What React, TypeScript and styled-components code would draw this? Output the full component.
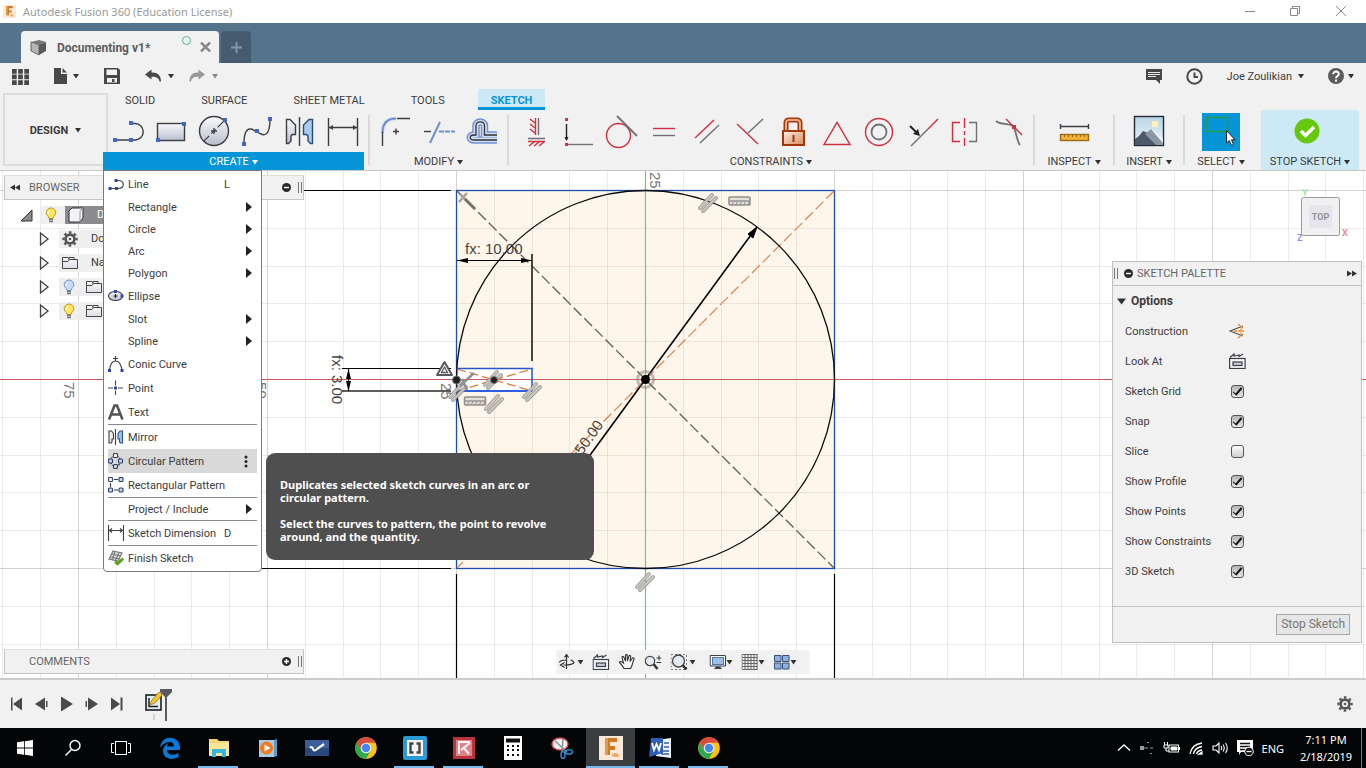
import React from 'react';
import styled, { createGlobalStyle, css } from 'styled-components';

const ui = `Roboto, "Liberation Sans", sans-serif`;
const system = `"Noto Sans", "Open Sans", sans-serif`;
const blue = '#0696d7';
const panel = '#f1f1f1';
const ink = '#3c3c3c';

const GlobalStyle = createGlobalStyle`
  *, *::before, *::after { box-sizing: border-box; }
  body { margin: 0; background: #fff; color: ${ink}; font: 11px/16px ${ui}; }
  button { font: inherit; color: inherit; background: none; border: 0; padding: 0; cursor: default; }
  svg { display: block; flex: none; }
  p { margin: 0; }
`;

/* ---------- shell ---------- */

const Shell = styled.div`
  display: flex;
  flex-direction: column;
  min-height: 100vh;
  overflow: hidden;
`;

const TitleBar = styled.header`
  display: flex;
  align-items: center;
  gap: 7px;
  height: 23px;
  padding: 0 18px 0 3px;
  background: #fff;
  color: #999;
  font: 11px/20px ${system};
`;

const WindowButtons = styled.div`
  display: flex;
  gap: 34px;
  margin-left: auto;
`;

const TabStrip = styled.nav`
  display: flex;
  align-items: flex-end;
  gap: 2px;
  height: 40px;
  padding-left: 21px;
  background: #56738c;
`;

const DocumentTab = styled.div`
  display: flex;
  align-items: center;
  width: 198px;
  height: 32px;
  padding: 0 8px 0 9px;
  border-radius: 4px 4px 0 0;
  background: ${panel};
  color: #5c5c5c;
  font-size: 12px;
  font-weight: 700;
`;

const TabName = styled.span`
  flex: 1;
  padding: 2px 0 0 10px;
`;

const SyncRing = styled.span`
  align-self: flex-start;
  width: 9px;
  height: 9px;
  margin: 5px 9px 0 0;
  border: 1px solid #4bb8a0;
  border-radius: 50%;
`;

const NewTab = styled.button`
  display: grid;
  place-items: center;
  width: 30px;
  height: 32px;
  border-radius: 4px 4px 0 0;
  background: #455b70;
`;

const QuickBar = styled.div`
  display: flex;
  align-items: center;
  height: 26px;
  padding: 0 12px;
  background: ${panel};
`;

const QuickGroup = styled.div<{ $gap?: number; $end?: boolean }>`
  display: flex;
  align-items: center;
  gap: ${p => p.$gap ?? 25}px;
  margin-left: ${p => (p.$end ? 'auto' : '0')};
`;

const IconButton = styled.button<{ $gap?: number }>`
  display: flex;
  align-items: center;
  gap: ${p => p.$gap ?? 6}px;
`;

const UserName = styled.span`
  padding-top: 2px;
`;

/* ---------- ribbon ---------- */

const Ribbon = styled.div`
  position: relative;
  z-index: 2;
  display: flex;
  height: 82px;
  padding: 0 7px 0 3px;
  border-bottom: 1px solid #c8c8c8;
  background: ${panel};
`;

const Workspace = styled.button`
  display: flex;
  align-items: center;
  justify-content: center;
  gap: 7px;
  width: 105px;
  height: 73px;
  margin-top: 4px;
  padding-top: 2px;
  border: 2px solid #dcdcdc;
  font-weight: 700;
`;

const RibbonMain = styled.div`
  display: flex;
  flex: 1;
  flex-direction: column;
  margin-left: -5px;
`;

const RibbonTabs = styled.div`
  display: flex;
  gap: 20px;
  height: 21px;
  padding-left: 9px;
`;

const RibbonTab = styled.button<{ $active?: boolean }>`
  height: 21px;
  padding: 2px 13px 0;
  ${p =>
    p.$active &&
    css`
      padding-top: 4px;
      border-bottom: 3px solid ${blue};
      background: #cce9f5;
      color: ${blue};
      font-weight: 700;
    `}
`;

const Groups = styled.div`
  display: flex;
  height: 61px;
`;

const Group = styled.section<{ $width?: number; $lit?: boolean }>`
  position: relative;
  display: flex;
  flex-direction: column;
  width: ${p => (p.$width ? `${p.$width}px` : 'auto')};
  height: ${p => (p.$lit ? '60px' : 'auto')};
  margin-left: ${p => (p.$lit ? '8px' : '0')};
  background: ${p => (p.$lit ? '#cce9f5' : 'transparent')};
`;

const GroupTools = styled.div<{ $inset?: number }>`
  display: flex;
  justify-content: center;
  height: 42px;
  padding-left: ${p => p.$inset ?? 0}px;
`;

const Tool = styled.button<{ $selected?: boolean }>`
  display: grid;
  place-items: center;
  width: ${p => (p.$selected ? 38 : 43)}px;
  height: ${p => (p.$selected ? 38 : 42)}px;
  margin-top: ${p => (p.$selected ? 3 : 0)}px;
  background: ${p => (p.$selected ? blue : 'transparent')};
`;

const GroupLabel = styled.button<{ $open?: boolean }>`
  display: flex;
  align-items: center;
  justify-content: center;
  gap: 3px;
  height: 18px;
  padding-top: 2px;
  background: ${p => (p.$open ? blue : 'transparent')};
  color: ${p => (p.$open ? '#fff' : ink)};
  white-space: nowrap;
`;

const Divider = styled.i`
  width: 2px;
  height: 50px;
  margin: 5px 4px 0;
  background: #dadada;
`;

/* ---------- create menu ---------- */

const Menu = styled.div`
  position: absolute;
  top: 60px;
  left: 0;
  display: flex;
  flex-direction: column;
  width: 159px;
  padding: 1px 4px;
  border: 1px solid #7b7b7b;
  border-radius: 0 0 4px 4px;
  background: #fff;
`;

const MenuRow = styled.div`
  position: relative;
`;

const MenuItem = styled.button<{ $tall?: boolean; $hover?: boolean }>`
  display: flex;
  align-items: center;
  width: 100%;
  height: ${p => (p.$tall ? 24 : 22)}px;
  padding-right: 5px;
  background: ${p => (p.$hover ? '#d9d9d9' : 'transparent')};
  text-align: left;
  white-space: nowrap;
`;

const MenuIcon = styled.span`
  width: 20px;
`;

const MenuText = styled.span`
  flex: 1;
  padding-top: 2px;
`;

const Shortcut = styled.kbd`
  width: 28px;
  padding-top: 2px;
  font: inherit;
`;

const MenuRule = styled.hr`
  width: 100%;
  height: 1px;
  margin: 0;
  border: 0;
  background: #888;
`;

const Tooltip = styled.div`
  position: absolute;
  top: 4px;
  left: 158px;
  display: flex;
  flex-direction: column;
  gap: 13px;
  width: 328px;
  padding: 25px 14px 17px;
  border-radius: 9px;
  background: #4f4f4f;
  color: #fff;
  font: 700 11px/13px ${system};
`;

/* ---------- canvas ---------- */

const Canvas = styled.main`
  position: relative;
  flex: 1;
  min-height: 507px;
  background: #fff;
`;

const Drawing = styled.svg`
  position: absolute;
  inset: 0;
  width: 100%;
  height: 100%;
`;

const BrowserPanel = styled.aside`
  position: absolute;
  top: 4px;
  left: 4px;
  width: 300px;
`;

const CommentsPanel = styled.aside`
  position: absolute;
  bottom: 4px;
  left: 4px;
  width: 300px;
`;

const PanelBar = styled.div`
  display: flex;
  align-items: center;
  height: 25px;
  padding: 0 1px 0 5px;
  border: 1px solid #c4c4c4;
  border-top-color: #dedede;
  background: ${panel};
  color: #666;
`;

const PanelName = styled.h2<{ $inset: number }>`
  flex: 1;
  margin: 0;
  padding-left: ${p => p.$inset}px;
  font-size: 11px;
  font-weight: 400;
`;

const Tree = styled.ul`
  margin: 3px 0 0;
  padding: 0;
  list-style: none;
`;

const TreeRow = styled.li<{ $root?: boolean }>`
  display: flex;
  align-items: center;
  height: 24px;
  padding-left: ${p => (p.$root ? 16 : 35)}px;
`;

const TreeCell = styled.span<{ $bulb?: boolean; $dark?: boolean }>`
  display: flex;
  align-items: center;
  gap: 13px;
  height: 18px;
  padding: ${p => (p.$bulb ? '0 8px 0 4px' : '0 3px')};
  background: ${p => (p.$dark ? '#8c8c90' : '#efefef')};
  color: ${p => (p.$dark ? '#fff' : ink)};
`;

const TreeToggle = styled.button<{ $root?: boolean }>`
  margin-right: ${p => (p.$root ? 8 : 9)}px;
`;

const Palette = styled.aside`
  position: absolute;
  top: 90px;
  right: 4px;
  width: 250px;
  border: 1px solid #c0c0c0;
  background: ${panel};
`;

const PaletteBar = styled.div`
  display: flex;
  align-items: center;
  height: 24px;
  padding: 0 4px 0 1px;
  border-bottom: 1px solid #c0c0c0;
  color: #666;
`;

const PaletteSection = styled.h3`
  display: flex;
  align-items: center;
  gap: 5px;
  height: 30px;
  margin: 0;
  padding-left: 4px;
  font-size: 12px;
  font-weight: 700;
`;

const OptionRow = styled.label`
  display: grid;
  grid-template-columns: 103px 18px;
  align-items: center;
  justify-items: center;
  height: 30px;
  padding-left: 12px;
`;

const OptionName = styled.span`
  justify-self: start;
  padding-top: 2px;
`;

const Tick = styled.input`
  display: grid;
  place-items: center;
  width: 13px;
  height: 13px;
  margin: 0;
  appearance: none;
  border: 1px solid #555;
  border-radius: 3px;
  background: linear-gradient(#fdfdfd, #cfcfcf);
  &:checked { background: linear-gradient(#b5b5b5, #e6e6e6); }
  &:checked::after {
    content: '';
    width: 5px;
    height: 9px;
    margin-bottom: 3px;
    border: solid #111;
    border-width: 0 2px 1px 0;
    transform: rotate(40deg);
  }
`;

const PaletteFoot = styled.div`
  display: flex;
  justify-content: flex-end;
  margin-top: 20px;
  padding: 7px 11px;
  border-top: 1px solid #c4c4c4;
`;

const StopButton = styled.button`
  height: 21px;
  padding: 0 4px;
  border: 1px solid #a8a8a8;
  background: #e6e6e6;
  color: #777;
  font: 12px/19px ${ui};
`;

const NavBar = styled.div`
  position: absolute;
  bottom: 4px;
  left: 50%;
  display: flex;
  align-items: center;
  gap: 9px;
  width: 253px;
  height: 24px;
  padding: 0 2px;
  background: ${panel};
  transform: translateX(-50%);
`;

const Grip = styled.i<{ $lead?: boolean }>`
  width: 4px;
  height: 11px;
  margin: ${p => (p.$lead ? '0 6px 0 0' : '0 0 0 7px')};
  border: solid #777;
  border-width: 0 1px;
`;

/* ---------- timeline and taskbar ---------- */

const Timeline = styled.footer`
  display: flex;
  align-items: center;
  justify-content: space-between;
  height: 50px;
  padding: 0 13px 0 10px;
  border-top: 2px solid #cbcbcb;
  background: ${panel};
`;

const Transport = styled.div`
  display: flex;
  align-items: center;
  gap: 9px;
`;

const Marker = styled.div`
  padding-left: 10px;
`;

const Taskbar = styled.footer`
  display: flex;
  height: 40px;
  padding-left: 1px;
  background: #030506;
  color: #fff;
  font: 11px/17px ${system};
`;

const TaskButton = styled.button<{ $state?: 'open' | 'front'; $narrow?: boolean }>`
  position: relative;
  display: grid;
  place-items: center;
  width: ${p => (p.$narrow ? 48 : 49)}px;
  height: 40px;
  background: ${p => (p.$state === 'front' ? '#3b3e40' : 'transparent')};
  &::after {
    content: '';
    position: absolute;
    right: ${p => (p.$state === 'front' ? 0 : 5)}px;
    bottom: 0;
    left: ${p => (p.$state === 'front' ? 0 : 4)}px;
    height: 2px;
    background: ${p => (p.$state ? '#76b9ed' : 'transparent')};
  }
`;

const Tray = styled.div`
  display: flex;
  align-items: center;
  gap: 8px;
  margin-left: auto;
  padding-right: 4px;
`;

const Clock = styled.time`
  width: 54px;
  margin-left: 7px;
  text-align: center;
`;

const ShowDesktop = styled.i`
  align-self: stretch;
  width: 1px;
  background: #777;
`;

/* ---------- small marks ---------- */

const Caret = ({ color = '#333' }: { color?: string }) => (
  <svg width="6" height="5" viewBox="0 0 6 5"><path d="M0 0H6L3 4.5Z" fill={color} /></svg>
);

const Sq = ({ x, y, c = '#4267c4', s = 4 }: { x: number; y: number; c?: string; s?: number }) => (
  <rect x={x - s / 2} y={y - s / 2} width={s} height={s} fill={c} />
);

const Box40 = ({ children }: { children: React.ReactNode }) => (
  <svg width="40" height="40" viewBox="0 0 40 40" fill="none" strokeWidth="1.4">{children}</svg>
);

const dk = '#3a3d42';
const red = '#cf2f3f';
const gy = '#6e7074';

const createTools: [string, React.ReactNode][] = [
  ['Line', <><path d="M7 29H27a8.2 8.2 0 0 0 0-16.5H23" stroke={dk} /><Sq x={7} y={29} /><Sq x={23} y={29} /><Sq x={23} y={12} /></>],
  ['Rectangle', <><rect x="6.5" y="12.5" width="27" height="17" fill="url(#steel)" stroke={dk} /><Sq x={33} y={13} /><Sq x={7} y={29} /></>],
  ['Circle', <><circle cx="20" cy="20" r="14.5" fill="url(#steel)" stroke={dk} /><path d="M30 10L10 30" stroke={dk} strokeWidth="1.1" strokeDasharray="9 3 6 3" /><path d="M20 17v6M17 20h6" stroke={dk} /><Sq x={31} y={9} /></>],
  ['Spline', <><path d="M7 33C7 22 9 18 13 18C17 18 17 20 20 20.5C23 23 26 25 29 23C32 21 33 16 33 8" stroke={dk} /><Sq x={7} y={33} /><Sq x={20} y={20} /><Sq x={33} y={8} /></>],
  ['Mirror', <><path d="M6.5 8.5H10L15.500 14V23.5H12.5Q11 24 11 26V30L8.5 32.5H6.5Z" fill="url(#steel)" stroke={dk} /><path d="M19.5 6V35" stroke={dk} /><path d="M32.5 8.5H29L23.5 14V23.5H26.5Q28 24 28 26V30L30.5 32.5H32.5Z" fill="#a8cbee" stroke="#2f4a78" /></>],
  ['Sketch Dimension', <><path d="M5.5 7V35M34.5 7V35M6 16.5H34" stroke={dk} /><path d="M6 16.5l4-2.5v5zM34 16.5l-4-2.5v5z" fill={dk} /></>],
];

const modifyTools: [string, React.ReactNode][] = [
  ['Fillet', <><path d="M6.5 22C6.5 12 11 7.5 20 7.5" stroke="#aebfe8" strokeWidth="3" /><path d="M6.5 22C6.5 12 11 7.5 20 7.5" stroke="#6286d6" /><path d="M6.5 21V35M21 7.5H34M17 20.5h6M20 17.5v6" stroke={dk} /></>],
  ['Trim', <><path d="M5 20.5H12" stroke={dk} /><path d="M21 11L11 32" stroke="#6f8fd8" strokeWidth="2" /><path d="M20 20.5H36" stroke="#6f8fd8" strokeWidth="2" strokeDasharray="5 1" /></>],
  ['Offset', <>{[['#7291d6', 7.5], ['#d3def3', 4.5], ['#2f3136', 1.3]].map(([c, w]) => <path key={c} d="M35 29H12C7 29 7 24 12 24H14V15C14 9.5 22.5 9.5 22.5 15V24H35" stroke={c as string} strokeWidth={w} />)}</>],
];

const constraintTools: [string, React.ReactNode][] = [
  ['Horizontal/Vertical', <><path d="M20.5 7V24M15 8l5 4M15 13l5 4M15 18l5 4M13 30.5H30M19 31l-5 4M24 31l-5 4M29 31l-5 4" stroke={red} /><path d="M23.5 7V24M13 27.5H30" stroke={gy} /></>],
  ['Coincident', <><path d="M9 33.5H35" stroke={gy} /><path d="M8.5 13V29" stroke="#222" /><path d="M6.5 26h4l-2 4z" fill="#222" /><Sq x={8.5} y={8.5} c={red} s={3} /><Sq x={8.5} y={33.5} c={red} s={3} /></>],
  ['Tangent', <><circle cx="17.5" cy="24.5" r="12" stroke={red} /><path d="M16 5L36 25" stroke={gy} strokeWidth="1.8" /></>],
  ['Equal', <><path d="M9 17.5H31" stroke={red} /><path d="M9 24.5H31" stroke={gy} /></>],
  ['Parallel', <><path d="M8 27L27 9" stroke={red} /><path d="M13 32L32 14" stroke={gy} /></>],
  ['Perpendicular', <><path d="M7 13L28 33" stroke={red} /><path d="M18 22L33 8" stroke={gy} /></>],
  ['Fix', <><path d="M13 21V12Q13 9 16 9H24Q27 9 27 12V21" stroke="#a3370c" strokeWidth="5" /><path d="M13 21V12Q13 9 16 9H24Q27 9 27 12V21" stroke="#e9a67c" strokeWidth="2" /><rect x="10" y="20" width="21" height="14" fill="url(#copper)" stroke="#a3370c" strokeWidth="2" /><path d="M20.5 24V31" stroke="#a3370c" strokeWidth="2" /></>],
  ['Midpoint', <path d="M8 33.5H34L21 11.5Z" stroke={red} />],
  ['Concentric', <><circle cx="20" cy="21" r="13.5" stroke={red} /><circle cx="20" cy="21" r="7.5" stroke={gy} strokeWidth="1.8" /></>],
  ['Collinear', <><path d="M9 35L26 18" stroke={gy} /><path d="M26 18L36 8" stroke={red} /><path d="M8 15L15 22" stroke="#222" strokeWidth="2" /><path d="M18 25l-7-2 5-5z" fill="#222" /></>],
  ['Symmetry', <><path d="M15 11.5H7.5V30.5H15" stroke={red} /><path d="M19.5 7V35" stroke={red} strokeDasharray="10 3 4 3" /><path d="M24 11.5H31.5V30.5H24" stroke={gy} /></>],
  ['Curvature', <><path d="M8 10C12 14 20 12 25 15C28 19 29 31 32 34" stroke={gy} strokeWidth="1.8" /><path d="M18 8L34 24" stroke={red} /><Sq x={26} y={16} c={red} /></>],
];

const InspectIcon = () => (
  <Box40><path d="M6.5 13V18M34.5 13V18M6.5 15.5H34.5" stroke={dk} /><rect x="6.5" y="23.5" width="28" height="6" fill="#f3b33a" stroke="#9c6a14" /><path d="M10.5 24v2M14.5 24v2M18.5 24v2M22.5 24v2M26.5 24v2M30.5 24v2" stroke="#9c6a14" strokeWidth="1" /></Box40>
);

const InsertIcon = () => (
  <Box40><rect x="5.5" y="5.5" width="29" height="29" fill="url(#sky)" stroke="#222a38" /><path d="M6 28L10 25L14 20L19 22L29 34H6Z" fill="#4e5a6a" /><path d="M16 23L22 18L34 32V34H27Z" fill="#8b97a5" /><path d="M22 18L34 32V27L28 22Z" fill="#e8eff5" /><Sq x={26} y={13} c="#fff0b8" s={6} /></Box40>
);

const SelectIcon = () => (
  <svg width="38" height="38" viewBox="0 0 38 38"><rect x="4.5" y="4.5" width="21" height="14" fill="none" stroke="#259a48" strokeWidth="1.5" /><path d="M24.5 17.5V30L27.3 27.5L29.5 32.5L31.5 31.5L29.5 26.8H33Z" fill="#fff" stroke="#222" /></svg>
);

const StopIcon = () => (
  <svg width="32" height="26" viewBox="0 0 32 26"><circle cx="13" cy="13" r="12.5" fill="#66c80c" /><path d="M7 13L11.5 17.5L20 9" fill="none" stroke="#fff" strokeWidth="3.5" /></svg>
);

const Gear = ({ size = 17, color = '#555' }: { size?: number; color?: string }) => (
  <svg width={size} height={size} viewBox="0 0 18 18" fill="none" stroke={color}>
    <circle cx="9" cy="9" r="5" strokeWidth="3" />
    <circle cx="9" cy="9" r="7.4" strokeWidth="2.6" strokeDasharray="2.9 2.91" strokeDashoffset="1.45" />
    <circle cx="9" cy="9" r="1.5" fill={color} stroke="none" />
  </svg>
);

const Bulb = ({ off }: { off?: boolean }) => (
  <svg width="12" height="16" viewBox="0 0 12 16">
    <path d="M6 1a4.8 4.8 0 0 0-4.8 5C1.2 8.5 4 9 4 11.5H8C8 9 10.8 8.5 10.8 6A4.8 4.8 0 0 0 6 1Z" fill={off ? '#c5dcf8' : '#ffe75c'} stroke={off ? '#7797c6' : '#b89b28'} />
    <path d="M5 3.5Q3 4.5 3.3 7" stroke="#fff" fill="none" />
    <path d="M4 12.5H8M4 14.5H8" stroke="#777" strokeWidth="1.4" />
  </svg>
);

const Folder = () => (
  <svg width="16" height="14" viewBox="0 0 16 14"><path d="M0.5 12.5V1.5H6L7 3.5V1.5H12V3.5H15.5V12.5Z" fill="url(#paper)" stroke="#444" /><path d="M1 5.5H6L7.5 3.5H15" fill="none" stroke="#444" /></svg>
);

const Disc = ({ plus }: { plus?: boolean }) => (
  <svg width="9" height="9" viewBox="0 0 9 9"><circle cx="4.5" cy="4.5" r="4.5" fill="#2b2b2b" /><path d={plus ? 'M2 4.5H7M4.5 2V7' : 'M2 4.5H7'} stroke="#fff" strokeWidth="1.4" /></svg>
);

const Double = ({ right }: { right?: boolean }) => (
  <svg width="10" height="7" viewBox="0 0 10 7"><path d={right ? 'M0 0.5L5 3.5L0 6.5ZM5 0.5L10 3.5L5 6.5Z' : 'M10 0.5L5 3.5L10 6.5ZM5 0.5L0 3.5L5 6.5Z'} fill="#333" /></svg>
);

/* ---------- menu data ---------- */

const Mi = ({ children }: { children: React.ReactNode }) => (
  <svg width="16" height="16" viewBox="0 0 16 16" fill="none" strokeWidth="1.1">{children}</svg>
);

const node = '#2f4a9c';
const patternNode = (x: number, y: number, f = '#c5d6ef') => (
  <rect key={`${x}-${y}`} x={x} y={y} width="4" height="4" rx="1" fill={f} stroke="#2c3e66" />
);

interface Entry { name: string; icon?: React.ReactNode; sub?: boolean; keyName?: string; rule?: boolean; hover?: boolean }

const entries: Entry[] = [
  { name: 'Line', keyName: 'L', icon: <><path d="M2 12.5H10.5C17 12.5 17 4.5 10 4.5H8" stroke={dk} /><Sq x={2} y={12.5} c={node} s={3} /><Sq x={8.5} y={12.5} c={node} s={3} /><Sq x={8} y={4.5} c={node} s={3} /></> },
  { name: 'Rectangle', sub: true },
  { name: 'Circle', sub: true },
  { name: 'Arc', sub: true },
  { name: 'Polygon', sub: true },
  { name: 'Ellipse', icon: <><ellipse cx="7.5" cy="8" rx="7" ry="4.5" fill="url(#steel)" stroke={dk} /><path d="M5.5 8h4M7.5 6v4" stroke="#222" /><Sq x={7.5} y={3.5} c={node} s={3} /><Sq x={14} y={8} c={node} s={3} /></> },
  { name: 'Slot', sub: true },
  { name: 'Spline', sub: true },
  { name: 'Conic Curve', icon: <><path d="M1.5 14C3 2 12 2 14 14M7.5 0v5M5 2.5h5" stroke={dk} /><Sq x={1.5} y={14.5} c={node} s={3} /><Sq x={14} y={14.5} c={node} s={3} /></> },
  { name: 'Point', icon: <><path d="M0 8H5M10 8H15M7.5 0.5V5.5M7.5 10.5V15" stroke="#3b4a63" /><Sq x={7.5} y={8} c={node} s={3} /></> },
  { name: 'Text', rule: true, icon: <path d="M1 15.500L6.5 1.5H9L14.5 15.5M3.5 10.5H12" stroke="#555" strokeWidth="2.600" /> },
  { name: 'Mirror', icon: <><path d="M1 2H3.5L5.5 4.5V10H4V13L3 14H1Z" fill="#eee" stroke={dk} /><path d="M7.5 0V16" stroke={dk} /><path d="M14.5 2H12L10 4.5V10H11.5V13L12.5 14H14.5Z" fill="#9cc3ee" stroke="#2c4f8c" /></> },
  { name: 'Circular Pattern', hover: true, icon: <><circle cx="7.5" cy="8" r="5" stroke={dk} strokeDasharray="2 1" />{patternNode(5.5, 0.5, '#fff')}{patternNode(0.5, 6)}{patternNode(10.5, 6)}{patternNode(5.5, 11.5)}</> },
  { name: 'Rectangular Pattern', rule: true, icon: <><path d="M6 2.5H10M2.5 6V10M6 13H10" stroke={dk} />{patternNode(0.5, 0.5, '#fff')}{patternNode(11, 0.5)}{patternNode(0.5, 11)}{patternNode(11, 11)}</> },
  { name: 'Project / Include', sub: true, rule: true },
  { name: 'Sketch Dimension', keyName: 'D', rule: true, icon: <path d="M0.5 0V16M15.5 0V16M1 5.5H15M4 3.5L1.5 5.5L4 7.5M12 3.5L14.5 5.5L12 7.5" stroke={dk} /> },
  { name: 'Finish Sketch', icon: <><path d="M5 1L14 3L10 11L1 9Z" fill="#ddd" stroke="#777" /><path d="M4 4L13 6M7 1.5L4 10M11 2.5L7 11M2.5 7L12 9" stroke="#777" /><path d="M7 11.5L9.5 14L15 8.5" stroke="#53a318" strokeWidth="2.6" /></> },
];

const CreateMenu = () => (
  <Menu role="menu" aria-label="Create">
    {entries.map(e => (
      <React.Fragment key={e.name}>
        <MenuRow>
          <MenuItem role="menuitem" $tall={!!e.icon || e.hover} $hover={e.hover}>
            <MenuIcon>{e.icon && <Mi>{e.icon}</Mi>}</MenuIcon>
            <MenuText>{e.name}</MenuText>
            {e.keyName && <Shortcut>{e.keyName}</Shortcut>}
            {e.sub && <svg width="6" height="10" viewBox="0 0 6 10"><path d="M0 0L6 5L0 10Z" fill="#222" /></svg>}
            {e.hover && <svg width="8" height="13" viewBox="0 0 8 13" fill="#222"><circle cx="2" cy="2" r="1.5" /><circle cx="2" cy="6.5" r="1.5" /><circle cx="2" cy="11" r="1.5" /></svg>}
          </MenuItem>
          {e.hover && (
            <Tooltip role="tooltip">
              <p>Duplicates selected sketch curves in an arc or<br />circular pattern.</p>
              <p>Select the curves to pattern, the point to revolve<br />around, and the quantity.</p>
            </Tooltip>
          )}
        </MenuRow>
        {e.rule && <MenuRule />}
      </React.Fragment>
    ))}
  </Menu>
);

/* ---------- sketch drawing ---------- */

const steps = (from: number, to: number) => Array.from({ length: to - from + 1 }, (_, i) => i + from);

const ParallelMark = ({ x, y }: { x: number; y: number }) => (
  <g transform={`translate(${x} ${y})`} strokeLinecap="round">
    <path d="M-8 5L4 -8M-5 8L8 -5" stroke="#8f8d88" strokeWidth="4" opacity="0.8" />
    <path d="M-8 5L4 -8M-5 8L8 -5" stroke="#c9c6c0" strokeWidth="2" />
  </g>
);

const RulerMark = ({ x, y }: { x: number; y: number }) => (
  <g transform={`translate(${x} ${y})`} fill="none" stroke="#918f8b">
    <rect x="-10.5" y="-4" width="21" height="8" rx="1" fill="#e3dfd9" strokeWidth="1.6" />
    <path d="M-10 0H10" strokeWidth="1.4" />
    <path d="M-8 4l2-3M-4 4l2-3M0 4l2-3M4 4l2-3M8 4l2-3" />
  </g>
);

const Sketch = () => (
  <Drawing viewBox="0 171 1366 507" preserveAspectRatio="xMidYMid slice" fontFamily="Liberation Sans, sans-serif" fontSize="15" fill="none" role="img" aria-label="Sketch">
    <path d="M456.5 190.5H834.5V568.5H456.5Z" fill="#fff6eb" />
    <path d="M457 368.5H532V391H457Z" fill="#fff" />
    {steps(-17, 19).map(i => <path key={i} d={`M${Math.round(645 + i * 37.8) + 0.5} 171V678`} stroke="#000" strokeOpacity={i % 5 ? 0.08 : 0.17} />)}
    {steps(-5, 7).map(i => <path key={i} d={`M0 ${Math.round(379 + i * 37.8) + 0.5}H1366`} stroke="#000" strokeOpacity={i % 5 ? 0.08 : 0.17} />)}
    <path d="M0 379.5H1366" stroke="#c85a62" />
    <path d="M645.5 171V678" stroke="#5bd65f" strokeWidth="1.2" />

    <g fill="#77797c">
      <text transform="translate(650 172) rotate(90)">25</text>
      <text transform="translate(64 382) rotate(90)">75</text>
      <text transform="translate(256 382) rotate(90)">50</text>
      <text transform="translate(441 383) rotate(90)">25</text>
    </g>

    <path d="M262 190.5H451M262 568.5H451M456.5 574V678M834.5 574V678" stroke="#000" strokeWidth="1.2" />
    <rect x="456.5" y="190.5" width="378" height="378" stroke="#1c4db0" strokeWidth="1.3" />
    <path d="M457 191L834 568" stroke="#5f5a54" strokeWidth="1.3" strokeDasharray="11 4" />
    <path d="M834 191L457 568" stroke="#dd8450" strokeWidth="1.2" strokeDasharray="11 4" />
    <circle cx="645.5" cy="379.5" r="189" stroke="#0b0b0b" strokeWidth="1.3" />

    <path d="M457 369L532 391M457 391L532 369" stroke="#e0803f" strokeWidth="1.3" strokeDasharray="9 4" />
    <path d="M457 368.5H532V391" stroke="#2456c8" strokeWidth="1.5" />
    <path d="M457 391H532" stroke="#2d5fe0" strokeWidth="2" />

    <path d="M457 260.5H532M348.5 369V391M342 368.5H451" stroke="#000" strokeWidth="1.2" />
    <path d="M532 254V361M342 391H451" stroke="#2d2a26" strokeWidth="1.7" />
    <path d="M457 260.5l11-2.5v5zM532 260.5l-11-2.5v5zM348.5 369l-2.5 10h5zM348.5 391l-2.5-10h5z" fill="#000" />
    <g fill="#444">
      <text x="465" y="254">fx: 10.00</text>
      <text transform="translate(332 355) rotate(90)">fx: 3.00</text>
      <text transform="translate(604 425) rotate(-54)" textAnchor="end">⌀50.00</text>
    </g>
    <path d="M756 228L585 462" stroke="#000" strokeWidth="1.6" />
    <path d="M757 227l-9 7 5 4z" fill="#000" stroke="#000" />

    <ParallelMark x={708} y={203} />
    <ParallelMark x={645} y={582} />
    <ParallelMark x={532} y={392} />
    <ParallelMark x={494} y={404} />
    <ParallelMark x={493} y={380} />
    <ParallelMark x={458} y={392} />
    <RulerMark x={739.5} y={201} />
    <RulerMark x={475} y={401} />
    <path d="M459 202L467 193M460 194L466 200" stroke="#a5a19b" strokeWidth="2.5" />
    <path d="M465 199L475 209" stroke="#77726b" strokeWidth="3" />
    <path d="M460 386L474 373M462 379L467 390" stroke="#918f8b" strokeWidth="2.5" />
    <path d="M437 375H452L444.5 362Z" fill="#fff" stroke="#55585c" strokeWidth="2" strokeLinejoin="round" />
    <path d="M441.500 372.5H447.5L444.5 367Z" stroke="#55585c" strokeWidth="1.3" />
    <circle cx="456.5" cy="380" r="4" fill="#222" stroke="#777" />
    <circle cx="494" cy="380" r="3.5" fill="#222" stroke="#777" />
    <circle cx="645.5" cy="379.5" r="8" stroke="#857e76" strokeOpacity="0.5" strokeWidth="3" />
    <circle cx="645.5" cy="379.5" r="4.5" fill="#000" />
  </Drawing>
);

const CubeButton = styled.button`
  position: absolute;
  top: 18px;
  right: 16px;
`;

const ViewCube = () => (
  <CubeButton aria-label="View cube">
    <svg width="54" height="58" viewBox="0 0 54 58" fontFamily="Roboto, sans-serif" fontSize="9" fontWeight="700">
      <rect x="5.5" y="8.5" width="38" height="38" rx="2" fill="#f0f0f2" stroke="#9a9a9a" />
      <rect x="13" y="16" width="23" height="23" fill="#e6e6ea" />
      <text x="24.5" y="31" textAnchor="middle" fill="#8e9299">TOP</text>
      <text x="6" y="7" fill="#9be89e">Y</text>
      <text x="46" y="47" fill="#f58a90">X</text>
      <text x="1" y="52" fill="#8f8fea">Z</text>
    </svg>
  </CubeButton>
);

/* ---------- navigation bar icons ---------- */

const LookAt = () => (
  <svg width="17" height="16" viewBox="0 0 17 16" fill="none" stroke="#3b3f48" strokeWidth="1.2"><rect x="0.6" y="5.5" width="15.5" height="10" fill="#f4f5f8" /><rect x="4" y="9" width="9" height="3.5" fill="#c8ccda" /><path d="M1 4.5L5 1V3L10 2V3.5L14 1" /></svg>
);

const nav: { name: string; caret?: boolean; tight?: boolean; art: React.ReactNode }[] = [
  { name: 'Orbit', caret: true, art: <svg width="17" height="16" viewBox="0 0 17 16" fill="none" stroke="#333" strokeWidth="1.2"><path d="M8 15V2M6 3.5L8 0.5L10 3.5M12 6C18 8 16 11 5 11M6 8.5L2 11L6 13.5M8 6C3 6 1 7 1 8.5" /></svg> },
  { name: 'Look At', art: <LookAt /> },
  { name: 'Pan', art: <svg width="17" height="16" viewBox="0 0 17 16"><path d="M5.5 14.5C4.5 12 2 9.5 1 8.5C1 7 2.5 7 5 9L3.5 3.5C3.5 2 5 2 5.5 3.5L7 7V1.5C7 0.3 8.8 0.3 8.8 1.5V7L10.5 2C11 1 12.3 1.3 12.2 2.5L11.5 7.5L14 4C14.8 3.3 16 4 15.5 5C14 8.5 14 12 12 14.5Z" fill="#fafafa" stroke="#333" strokeWidth="1.1" /></svg> },
  { name: 'Zoom', art: <svg width="17" height="16" viewBox="0 0 17 16" fill="none"><circle cx="5.5" cy="7" r="4.7" fill="#e2ebf2" stroke="#444" strokeWidth="1.3" /><path d="M9 10L13 15" stroke="#333" strokeWidth="2.6" /><path d="M12 4H17M14.5 1.5V6.5M12 8.5H17" stroke="#333" /></svg> },
  { name: 'Fit', caret: true, art: <svg width="17" height="16" viewBox="0 0 17 16" fill="none"><rect x="0.5" y="0.5" width="15.5" height="15" stroke="#777" strokeDasharray="2 2" /><circle cx="8" cy="7" r="6" fill="#e2ebf2" stroke="#444" strokeWidth="1.3" /><path d="M12 11L16 15.5" stroke="#333" strokeWidth="2.6" /></svg> },
  { name: 'Display Settings', caret: true, tight: true, art: <svg width="17" height="16" viewBox="0 0 17 16"><rect x="0.6" y="1.5" width="15.5" height="10.5" rx="1" fill="#fff" stroke="#3b3f48" strokeWidth="1.2" /><rect x="3" y="3.5" width="11" height="7" fill="#9fbfe6" stroke="#5277a8" /><path d="M4.5 15H12.5L10.5 12.5H6.5Z" fill="#3b3f48" /></svg> },
  { name: 'Grid and Snaps', caret: true, tight: true, art: <svg width="17" height="16" viewBox="0 0 17 16" stroke="#666" fill="none"><path d="M1 0.5H16M1 3.5H16M1 6.5H16M1 9.5H16M1 12.5H16M1 15.5H16M0.5 0V16M3.5 0V16M6.5 0V16M9.5 0V16M12.5 0V16M15.5 0V16" /></svg> },
  { name: 'Viewports', caret: true, tight: true, art: <svg width="17" height="16" viewBox="0 0 17 16" fill="#8fb0dc" stroke="#3b4f74"><path d="M1 1.5H7.5V7.5H1ZM9 1.5H15.5V7.5H9ZM1 9H7.5V15H1ZM9 9H15.5V15H9Z" /></svg> },
];

const NavButton = styled.button<{ $apart?: boolean; $gap: number }>`
  display: flex;
  align-items: center;
  gap: ${p => p.$gap}px;
  margin-left: ${p => (p.$apart ? 5 : 0)}px;
`;

/* ---------- taskbar icons ---------- */

const Chrome = () => (
  <svg width="22" height="22" viewBox="0 0 22 22">
    <circle cx="11" cy="11" r="10.8" fill="#fbc116" />
    <path d="M1.65 5.6A10.8 10.8 0 0 1 20.4 5.7H11L6.4 13.6Z" fill="#dd4b3e" />
    <path d="M1.65 5.6A10.8 10.8 0 0 0 11 21.8L15.6 13.7L6.4 13.6Z" fill="#2da94f" />
    <circle cx="11" cy="11" r="5.3" fill="#f4f4f4" /><circle cx="11" cy="11" r="4.2" fill="#4285f4" />
  </svg>
);

const FusionLogo = ({ size }: { size: number }) => (
  <svg width={size} height={size} viewBox="0 0 24 24"><rect width="24" height="24" fill="#fbe8d8" /><path d="M6 2H18V6H11V10H16V14H11V19H6Z" fill="#cc7a26" /><path d="M6 2H9V19H6Z" fill="#e79a45" /><path d="M13 20q0-3 3-3 4 0 4 4h-5z" fill="#f0a96a" /></svg>
);

const tasks: { name: string; narrow?: boolean; state?: 'open' | 'front'; art: React.ReactNode }[] = [
  { name: 'Start', narrow: true, art: <svg width="16" height="16" viewBox="0 0 16 16" fill="#fff"><path d="M0 2.3L7 1.3V7.6H0ZM7.8 1.2L16 0V7.6H7.8ZM0 8.4H7V14.7L0 13.7ZM7.8 8.4H16V16L7.8 14.8Z" /></svg> },
  { name: 'Search', narrow: true, art: <svg width="18" height="18" viewBox="0 0 18 18" fill="none" stroke="#fff" strokeWidth="1.4"><circle cx="11" cy="6.5" r="5" /><path d="M7.5 10.5L1.5 16.5" /></svg> },
  { name: 'Task View', narrow: true, art: <svg width="20" height="16" viewBox="0 0 20 16" fill="none" stroke="#fff"><rect x="4.5" y="1.5" width="11" height="13" /><path d="M3 3.5H0.5V12.5H3M17 3.5H19.5V12.5H17" /></svg> },
  { name: 'Edge', art: <svg width="22" height="22" viewBox="0 0 22 22"><path d="M1 10.5C2 4 6 0.7 11 0.7C17 0.7 21 5 21 10.5V13H8C8 18 14.5 19 19.5 16V20C12 24 4 21 4 14C4 10 6.5 7.5 9.5 6.2C8.5 7.5 8 8.5 8 9.5H14.7C15 6.5 13.5 5 11 5C7 5 3.5 7 1 10.5Z" fill="#0a78d7" /></svg> },
  { name: 'File Explorer', state: 'open', art: <svg width="22" height="20" viewBox="0 0 22 20"><path d="M1 1H9L11 3H21V18H1Z" fill="#f5d778" /><path d="M1 5H21V18H1Z" fill="#fbe596" /><path d="M4 19V11H18V19H14V15H8V19Z" fill="#36b6dc" /></svg> },
  { name: 'Media Player', art: <svg width="20" height="20" viewBox="0 0 20 20"><path d="M1 2H16L19 1V18L16 19H1Z" fill="#5b9cc4" /><path d="M1 2H16V19H1Z" fill="#a7cbe0" /><circle cx="8.5" cy="10" r="6.5" fill="#ee7a22" /><path d="M6.5 6.5V13.5L12.5 10Z" fill="#fff" /></svg> },
  { name: 'Planner', art: <svg width="24" height="16" viewBox="0 0 24 16"><rect width="24" height="16" fill="#29487c" /><rect width="24" height="8" fill="#3a5f9b" /><path d="M5 8Q7 6 8 9Q9 12 12 9L19 4" fill="none" stroke="#fff" strokeWidth="2.2" /></svg> },
  { name: 'Chrome', art: <Chrome /> },
  { name: 'Brackets', state: 'open', art: <svg width="24" height="24" viewBox="0 0 24 24"><rect width="24" height="24" rx="2" fill="#2a9bd3" /><rect x="4" y="4" width="16" height="16" fill="#f4f4f4" /><path d="M10.5 7.500H7.5V16.500H10.5M13.5 7.5H16.5V16.5H13.5" fill="none" stroke="#444" strokeWidth="2.4" /></svg> },
  { name: 'Reader', state: 'open', art: <svg width="22" height="22" viewBox="0 0 22 22"><rect width="22" height="22" fill="#b8353d" /><rect x="3" y="3" width="16" height="16" fill="#dc8288" /><path d="M5 5H17M6 5V17M17 6L8 13M10 10L16 17" fill="none" stroke="#fff3f3" strokeWidth="2" /></svg> },
  { name: 'Calculator', art: <svg width="18" height="24" viewBox="0 0 18 24"><rect width="18" height="24" fill="#fff" /><path d="M2 2.500H16V6.5H2ZM3 9h2v2H3zM8 9h2v2H8zM13 9h2v2h-2zM3 13h2v2H3zM8 13h2v2H8zM13 13h2v2h-2zM3 18h2v2H3zM8 18h2v2H8zM13 18h2v2h-2z" fill="#111" /></svg> },
  { name: 'Snipping Tool', art: <svg width="22" height="22" viewBox="0 0 22 22" fill="none"><ellipse cx="9" cy="7" rx="8" ry="6" fill="#f3f3f3" stroke="#d14d55" strokeWidth="1.5" /><path d="M4 4L16 15M12 2L11 15" stroke="#8a9199" strokeWidth="1.5" /><ellipse cx="12" cy="18" rx="2" ry="3.5" stroke="#2f8bd0" strokeWidth="1.5" /><ellipse cx="18" cy="15" rx="3.5" ry="2.2" stroke="#2f8bd0" strokeWidth="1.5" /></svg> },
  { name: 'Fusion 360', state: 'front', art: <FusionLogo size={24} /> },
  { name: 'Word', state: 'open', art: <svg width="24" height="22" viewBox="0 0 24 22"><path d="M9 3L23 1V21L8 19Z" fill="#eef3fb" /><path d="M16 6H21M16 10H21M13 14H21M13 17H21" stroke="#3562b0" strokeWidth="1.5" /><path d="M3 1H15V16L1 20Z" fill="#2f5eb5" /><path d="M4 6L6 13L8.5 7L11 13L13 6" fill="none" stroke="#fff" strokeWidth="1.8" /></svg> },
  { name: 'Chrome window', state: 'open', art: <Chrome /> },
];

const transports: [string, string][] = [
  ['Start', 'M1 1.5H2.5V14.5H1ZM12 1.5V14.5L3 8Z'],
  ['Step back', 'M10 1.5V14.5L0 8ZM11 5H12.5V11H11Z'],
  ['Play', 'M1 0.5V15.5L13 8Z'],
  ['Step forward', 'M3 1.5V14.5L13 8ZM0.5 5H2V11H0.5Z'],
  ['End', 'M10.5 1.5H12.5V14.5H10.5ZM1 1.5V14.5L10 8Z'],
];

const options: [string, boolean][] = [
  ['Sketch Grid', true], ['Snap', true], ['Slice', false], ['Show Profile', true],
  ['Show Points', true], ['Show Constraints', true], ['3D Sketch', true],
];

const ToolSet = ({ tools, inset }: { tools: [string, React.ReactNode][]; inset?: number }) => (
  <GroupTools $inset={inset}>
    {tools.map(([name, art]) => <Tool key={name} aria-label={name}><Box40>{art}</Box40></Tool>)}
  </GroupTools>
);

const Defs = styled.svg`
  position: absolute;
`;

export default function App() {
  return (
    <Shell>
      <GlobalStyle />
      <Defs width="0" height="0" aria-hidden="true">
        <linearGradient id="steel" x1="0" y1="0" x2="0" y2="1"><stop offset="0" stopColor="#fafafc" /><stop offset="1" stopColor="#b9bece" /></linearGradient>
        <linearGradient id="paper" x1="0" y1="0" x2="0" y2="1"><stop offset="0" stopColor="#fafafc" /><stop offset="1" stopColor="#dddfe8" /></linearGradient>
        <linearGradient id="copper" x1="0" y1="0" x2="1" y2="1"><stop offset="0" stopColor="#fff0e4" /><stop offset="1" stopColor="#d98a5c" /></linearGradient>
        <linearGradient id="sky" x1="0" y1="0" x2="0" y2="1"><stop offset="0" stopColor="#b8d4e6" /><stop offset="1" stopColor="#eef6fa" /></linearGradient>
      </Defs>

      <TitleBar>
        <FusionLogo size={13} />
        <span>Autodesk Fusion 360 (Education License)</span>
        <WindowButtons>
          <button aria-label="Minimize"><svg width="12" height="12" viewBox="0 0 12 12" stroke="#888"><path d="M1 5.5H11" /></svg></button>
          <button aria-label="Restore"><svg width="12" height="12" viewBox="0 0 12 12" stroke="#888" fill="none"><path d="M0.5 2.5H7.5V9.5H0.5ZM2.5 2V0.5H9.5V7.5H8" /></svg></button>
          <button aria-label="Close"><svg width="12" height="12" viewBox="0 0 12 12" stroke="#888"><path d="M0 0L10 10M10 0L0 10" /></svg></button>
        </WindowButtons>
      </TitleBar>

      <TabStrip>
        <DocumentTab>
          <svg width="17" height="17" viewBox="0 0 17 17"><path d="M1 3L9 1L16 3L9 5.5Z" fill="#777" /><path d="M1 3L9 5.5V16L1 12Z" fill="#b5b5b5" stroke="#666" /><path d="M9 5.5L16 3V12L9 16Z" fill="#5a5a5a" /></svg>
          <TabName>Documenting v1*</TabName>
          <SyncRing />
          <button aria-label="Close tab"><svg width="11" height="10" viewBox="0 0 11 10" stroke="#888" strokeWidth="2.5"><path d="M1 0.5L10 9.5M10 0.5L1 9.5" /></svg></button>
        </DocumentTab>
        <NewTab aria-label="New tab"><svg width="11" height="11" viewBox="0 0 11 11" stroke="#8795a2" strokeWidth="2"><path d="M5.5 0V11M0 5.5H11" /></svg></NewTab>
      </TabStrip>

      <QuickBar>
        <QuickGroup>
          <IconButton aria-label="Data panel"><svg width="17" height="17" viewBox="0 0 18 18" fill="#484848"><path d="M0 1h5v5H0zM6.5 1h5v5h-5zM13 1h5v5h-5zM0 7h5v5H0zM6.5 7h5v5h-5zM13 7h5v5h-5zM0 13h5v5H0zM6.5 13h5v5h-5zM13 13h5v5h-5z" /></svg></IconButton>
          <IconButton aria-label="File"><svg width="13" height="16" viewBox="0 0 13 16" fill="#484848"><path d="M0 0H7V6H13V16H0ZM8.5 0L13 4.5H8.5Z" /></svg><Caret /></IconButton>
          <IconButton aria-label="Save"><svg width="16" height="16" viewBox="0 0 16 16"><path d="M0 0H14L16 2V16H0Z" fill="#484848" /><path d="M2.5 1.5H13V7H2.5ZM3 10H13V14.5H3Z" fill="#f1f1f1" /><path d="M8 11h2.5v3H8z" fill="#484848" /></svg></IconButton>
          <QuickGroup $gap={15}>
            <IconButton aria-label="Undo"><svg width="17" height="14" viewBox="0 0 17 14"><path d="M0 5.5L6.5 0.5V3.5C12 3 16 6 16 12.5H14.5C14 9 11 7.5 6.5 7.8V10.5Z" fill="#484848" /></svg><Caret /></IconButton>
            <IconButton aria-label="Redo"><svg width="17" height="14" viewBox="0 0 17 14"><path d="M16 5.5L9.5 0.5V3.5C4 3 0.5 6 0.5 12.5H2C2.5 9 5 7.5 9.5 7.8V10.5Z" fill="#999" /></svg><Caret color="#888" /></IconButton>
          </QuickGroup>
        </QuickGroup>
        <QuickGroup $end $gap={24}>
          <IconButton aria-label="Comments"><svg width="16" height="15" viewBox="0 0 16 15"><path d="M0 0H16V11H14V15L10 11H0Z" fill="#484848" /><path d="M2 3.5H14M2 5.5H14M2 7.5H10" stroke="#e8e8e8" /></svg></IconButton>
          <IconButton aria-label="Job status"><svg width="17" height="17" viewBox="0 0 17 17" fill="none" stroke="#484848"><circle cx="8.5" cy="8.5" r="7.2" strokeWidth="2" /><path d="M8.5 4.5V9H12" strokeWidth="2" /></svg></IconButton>
          <IconButton><UserName>Joe Zoulikian</UserName><Caret /></IconButton>
          <IconButton aria-label="Help" $gap={4}><svg width="16" height="16" viewBox="0 0 16 16"><circle cx="8" cy="8" r="8" fill="#5c5c5c" /><path d="M5.2 6.3C5.2 2.5 11 2.8 10.8 6.2C10.7 8 8 8 8 10.2M8 11.5V13.5" fill="none" stroke="#fff" strokeWidth="2" /></svg><Caret /></IconButton>
        </QuickGroup>
      </QuickBar>

      <Ribbon>
        <Workspace>DESIGN <Caret /></Workspace>
        <RibbonMain>
          <RibbonTabs>
            <RibbonTab>SOLID</RibbonTab>
            <RibbonTab>SURFACE</RibbonTab>
            <RibbonTab>SHEET METAL</RibbonTab>
            <RibbonTab>TOOLS</RibbonTab>
            <RibbonTab $active>SKETCH</RibbonTab>
          </RibbonTabs>
          <Groups>
            <Group $width={261}>
              <ToolSet tools={createTools} inset={3} />
              <GroupLabel $open>CREATE<Caret color="#fff" /></GroupLabel>
              <CreateMenu />
            </Group>
            <Divider />
            <Group>
              <ToolSet tools={modifyTools} />
              <GroupLabel>MODIFY<Caret /></GroupLabel>
            </Group>
            <Divider />
            <Group>
              <ToolSet tools={constraintTools} />
              <GroupLabel>CONSTRAINTS<Caret /></GroupLabel>
            </Group>
            <Divider />
            <Group $width={70}>
              <GroupTools><Tool aria-label="Measure"><InspectIcon /></Tool></GroupTools>
              <GroupLabel>INSPECT<Caret /></GroupLabel>
            </Group>
            <Divider />
            <Group $width={60}>
              <GroupTools><Tool aria-label="Insert image"><InsertIcon /></Tool></GroupTools>
              <GroupLabel>INSERT<Caret /></GroupLabel>
            </Group>
            <Divider />
            <Group $width={64}>
              <GroupTools><Tool $selected aria-label="Select"><SelectIcon /></Tool></GroupTools>
              <GroupLabel>SELECT<Caret /></GroupLabel>
            </Group>
            <Group $width={98} $lit>
              <GroupTools><Tool aria-label="Stop sketch"><StopIcon /></Tool></GroupTools>
              <GroupLabel>STOP SKETCH<Caret /></GroupLabel>
            </Group>
          </Groups>
        </RibbonMain>
      </Ribbon>

      <Canvas>
        <Sketch />
        <ViewCube />
        <BrowserPanel>
          <PanelBar><Double /><PanelName $inset={9}>BROWSER</PanelName><Disc /><Grip /></PanelBar>
          <Tree>
            <TreeRow $root>
              <TreeToggle $root aria-label="Collapse"><svg width="13" height="13" viewBox="0 0 13 13"><path d="M12 1V12H1Z" fill="#8c8c8c" stroke="#333" /></svg></TreeToggle>
              <TreeCell $bulb><Bulb /></TreeCell>
              <TreeCell $dark><svg width="16" height="16" viewBox="0 0 16 16"><path d="M1 4L4 1H15V11L12 15H1Z" fill="#f3f3f5" stroke="#333" /><path d="M12 15V4L15 1" fill="none" stroke="#999" /></svg>D</TreeCell>
            </TreeRow>
            {[
              { name: 'Do', art: <Gear size={16} /> },
              { name: 'Na', art: <Folder /> },
              { bulb: <Bulb off />, art: <Folder /> },
              { bulb: <Bulb />, art: <Folder /> },
            ].map((row, i) => (
              <TreeRow key={i}>
                <TreeToggle aria-label="Expand"><svg width="11" height="14" viewBox="0 0 11 14"><path d="M1.5 1V13L9 7Z" fill="#f4f4f4" stroke="#444" strokeWidth="1.3" /></svg></TreeToggle>
                {row.bulb && <TreeCell $bulb>{row.bulb}</TreeCell>}
                <TreeCell>{row.art}{row.name}</TreeCell>
              </TreeRow>
            ))}
          </Tree>
        </BrowserPanel>

        <Palette>
          <PaletteBar><Grip $lead /><Disc /><PanelName $inset={4}>SKETCH PALETTE</PanelName><Double right /></PaletteBar>
          <PaletteSection><svg width="9" height="7" viewBox="0 0 9 7"><path d="M0 0.5H9L4.5 6.5Z" fill="#333" /></svg>Options</PaletteSection>
          <OptionRow as="div"><OptionName>Construction</OptionName><button aria-label="Construction"><svg width="16" height="16" viewBox="0 0 16 16" fill="none"><path d="M14 3L1 8L14 13" stroke="#555" strokeWidth="1.3" /><path d="M5 8H15M9 1L14 5M9 15L14 11M12 5.5V11" stroke="#f08a24" strokeWidth="1.3" strokeDasharray="3 1" /></svg></button></OptionRow>
          <OptionRow as="div"><OptionName>Look At</OptionName><button aria-label="Look At"><LookAt /></button></OptionRow>
          {options.map(([name, on]) => (
            <OptionRow key={name}><OptionName>{name}</OptionName><Tick type="checkbox" defaultChecked={on} /></OptionRow>
          ))}
          <PaletteFoot><StopButton>Stop Sketch</StopButton></PaletteFoot>
        </Palette>

        <CommentsPanel>
          <PanelBar><PanelName $inset={19}>COMMENTS</PanelName><Disc plus /><Grip /></PanelBar>
        </CommentsPanel>

        <NavBar>
          {nav.map(n => (
            <NavButton key={n.name} aria-label={n.name} $gap={n.tight ? 0 : 2} $apart={n.name === 'Display Settings'}>{n.art}{n.caret && <Caret />}</NavButton>
          ))}
        </NavBar>
      </Canvas>

      <Timeline>
        <Transport>
          {transports.map(([name, d]) => (
            <button key={name} aria-label={name}><svg width="16" height="16" viewBox="0 0 16 16" fill="#4a4a4a"><path d={d} /></svg></button>
          ))}
          <Marker>
            <svg width="28" height="36" viewBox="0 0 28 36"><rect x="1" y="9" width="15" height="15" fill="#dfeaf5" stroke="#111" strokeWidth="1.5" /><path d="M4 12V20.5H13" fill="none" stroke="#222" strokeWidth="1.5" /><path d="M5 19L7 14L14 6L17 9L10 17Z" fill="#f4c52c" stroke="#a57b18" strokeWidth="0.8" /><path d="M9 28V34" stroke="#c6cdd2" strokeWidth="1.5" /><path d="M15 3H27V6L22 11V35H20V11L15 6Z" fill="#5a5a5a" /></svg>
          </Marker>
        </Transport>
        <button aria-label="Timeline settings"><Gear size={16} /></button>
      </Timeline>

      <Taskbar>
        {tasks.map(t => (
          <TaskButton key={t.name} aria-label={t.name} $state={t.state} $narrow={t.narrow}>{t.art}</TaskButton>
        ))}
        <Tray>
          <svg width="14" height="16" viewBox="0 0 14 16" fill="none" stroke="#fff" strokeWidth="1.3"><path d="M1 10.5L7 5L13 10.5" /></svg>
          <svg width="16" height="16" viewBox="0 0 16 16" fill="#999"><path d="M1 6h4v4H1zM5 7.5h4v1H5zM11 7.5h3v1h-3zM8 2h2v1H8zM11 13h2v1h-2z" /></svg>
          <svg width="17" height="16" viewBox="0 0 17 16" fill="none" stroke="#fff"><rect x="6" y="5" width="9.5" height="7" /><path d="M8 7H14V10H8Z" fill="#fff" /><path d="M16.5 7V10M1.5 2V5M4.5 2V5M1 5H5V8H1ZM3 8V11H6" /></svg>
          <svg width="16" height="16" viewBox="0 0 16 16" fill="none" stroke="#fff" strokeWidth="1.3"><path d="M2 14C3 8 7 4 14 3M5.5 14C6 10 9 7.5 14 6.5M8.5 14C9 12 11 10.5 14 10" /><path d="M11 14L14 12V14Z" fill="#fff" /></svg>
          <svg width="17" height="16" viewBox="0 0 17 16" fill="none" stroke="#fff" strokeWidth="1.1"><path d="M1 6H4L7 3V13L4 10H1ZM9 6Q10.5 8 9 10M11 4.5Q13.5 8 11 11.5M13.5 3Q17 8 13.5 13" /></svg>
          <svg width="17" height="16" viewBox="0 0 17 16"><path d="M0 0H16V12H4L2 15V12H0Z" fill="#fff" /><path d="M3 3.5H13M3 6.5H13M3 9.5H8" stroke="#111" strokeWidth="1.3" /><circle cx="12" cy="11.5" r="4.3" fill="#111" stroke="#fff" /><path d="M9.5 11.5H14.5" stroke="#fff" strokeWidth="1.3" /></svg>
          <span>ENG</span>
          <Clock>7:11 PM<br />2/18/2019</Clock>
          <ShowDesktop />
        </Tray>
      </Taskbar>
    </Shell>
  );
}
